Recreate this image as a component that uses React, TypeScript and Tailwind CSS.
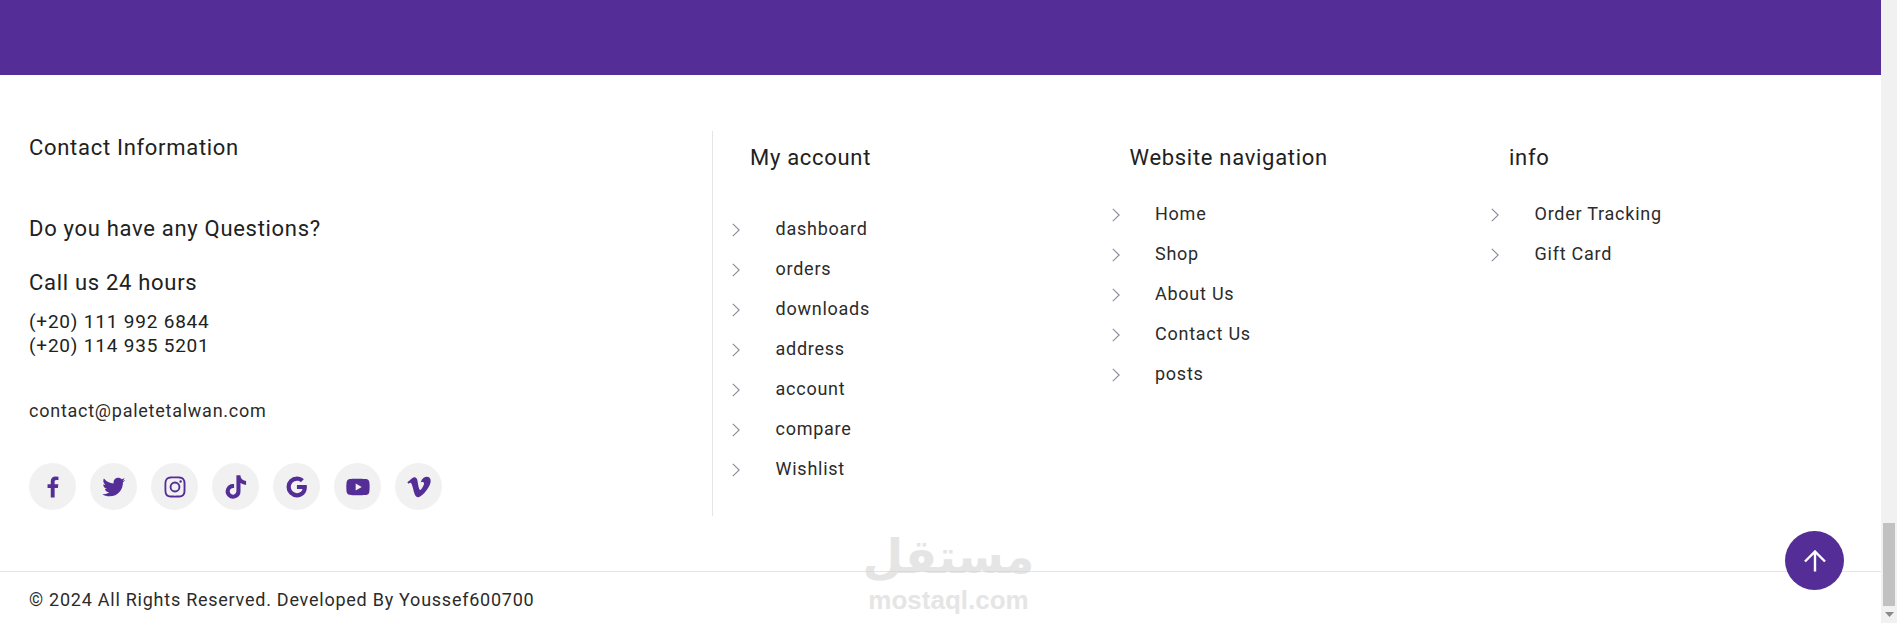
import React from 'react';
import { BiLogoFacebook, BiLogoTwitter, BiLogoInstagram, BiLogoTiktok, BiLogoGoogle, BiLogoYoutube, BiLogoVimeo } from 'react-icons/bi';

const socials = [BiLogoFacebook, BiLogoTwitter, BiLogoInstagram, BiLogoTiktok, BiLogoGoogle, BiLogoYoutube, BiLogoVimeo];
const account = ['dashboard', 'orders', 'downloads', 'address', 'account', 'compare', 'Wishlist'];
const navigation = ['Home', 'Shop', 'About Us', 'Contact Us', 'posts'];
const info = ['Order Tracking', 'Gift Card'];

function LinkColumn({ title, links, listClass }: { title: string; links: string[]; listClass: string }) {
    return (
        <div className="w-[379.5px] shrink-0 pt-[12px]">
            <h4 className="pl-[37px] text-[22px] leading-[30px] tracking-[0.7px] text-[#212121]">{title}</h4>
            <ul className={listClass}>
                {links.map((link) => (
                    <li key={link} className="flex h-10 items-center">
                        <svg className="ml-[19px] mt-[3px] h-[14px] w-[8px] shrink-0 text-[#8a8a9a]" viewBox="0 0 8 14" fill="none" stroke="currentColor" strokeWidth="1.1">
                            <path d="M0.8 0.8L7.2 7L0.8 13.2" />
                        </svg>
                        <span className="ml-[35.5px] text-[18px] tracking-[0.75px] text-[#2b2b2b]">{link}</span>
                    </li>
                ))}
            </ul>
        </div>
    );
}

export default function App() {
    return (
        <div className="relative flex h-[623px] overflow-hidden bg-white font-['Roboto',sans-serif]">
            <div className="min-w-0 flex-1">
                <div className="h-[75px] bg-[#542e96]" />

                <footer>
                    <div className="flex pt-[56px]">
                        {/* Contact */}
                        <div className="h-[385px] w-[713px] shrink-0 border-r border-[#e5e5e5] pl-[29px] pt-[2px] text-[#212121]">
                            <h4 className="text-[22px] leading-[30px] tracking-[0.7px]">Contact Information</h4>
                            <p className="mt-[51px] text-[22px] leading-[30px] tracking-[0.7px]">Do you have any Questions?</p>
                            <p className="mt-[24px] text-[22px] leading-[30px] tracking-[0.7px]">Call us 24 hours</p>
                            <p className="mt-[12px] text-[19px] leading-[24px] tracking-[0.8px]">(+20) 111 992 6844</p>
                            <p className="text-[19px] leading-[24px] tracking-[0.8px]">(+20) 114 935 5201</p>
                            <p className="mt-[41px] text-[18px] leading-[24px] tracking-[0.75px] text-[#2b2b2b]">contact@paletetalwan.com</p>
                            <div className="mt-[40px] flex gap-[14px]">
                                {socials.map((Icon, i) => (
                                    <a key={i} href="#" className="flex h-[47px] w-[47px] items-center justify-center rounded-full bg-[#f1f1f1] text-[#542e96]">
                                        <Icon className="text-[28px]" />
                                    </a>
                                ))}
                            </div>
                        </div>

                        {/* Links */}
                        <LinkColumn title="My account" links={account} listClass="mt-[35px]" />
                        <LinkColumn title="Website navigation" links={navigation} listClass="mt-[20px]" />
                        <LinkColumn title="info" links={info} listClass="mt-[20px]" />
                    </div>

                    <div className="mt-[55px] flex h-[52px] items-center border-t border-[#e5e5e5] pl-[29px] pt-[4px]">
                        <p className="text-[18px] tracking-[0.75px] text-[#2b2b2b]">© 2024 All Rights Reserved. Developed By Youssef600700</p>
                    </div>
                </footer>
            </div>

            {/* Page scrollbar */}
            <div className="flex w-4 shrink-0 flex-col items-center bg-[#f1f1f1]">
                <div className="mt-[523px] h-[83px] w-3 bg-[#c1c1c1]" />
                <svg className="mt-[6px] h-[5px] w-[9px]" viewBox="0 0 9 5" fill="#8a8a8a"><path d="M0 0H9L4.5 5Z" /></svg>
            </div>

            {/* Back to top */}
            <button className="absolute left-[1785px] top-[531px] flex h-[59px] w-[59px] items-center justify-center rounded-full bg-[#542e96]">
                <svg className="h-[22px] w-[22px]" viewBox="0 0 22 22" fill="none" stroke="white" strokeWidth="2.4">
                    <path d="M11 21.5V1.5M1 11.5L11 1.5L21 11.5" />
                </svg>
            </button>

            {/* Watermark */}
            <div className="pointer-events-none absolute left-[867px] top-[528px] flex w-[163px] flex-col items-center text-[#d4d4d4] opacity-60">
                <span className="font-['DejaVu_Sans',sans-serif] text-[47px] font-bold leading-[58px]">مستقل</span>
                <span className="font-['Liberation_Sans',sans-serif] text-[26px] font-bold leading-[28px]">mostaql.com</span>
            </div>
        </div>
    );
}
